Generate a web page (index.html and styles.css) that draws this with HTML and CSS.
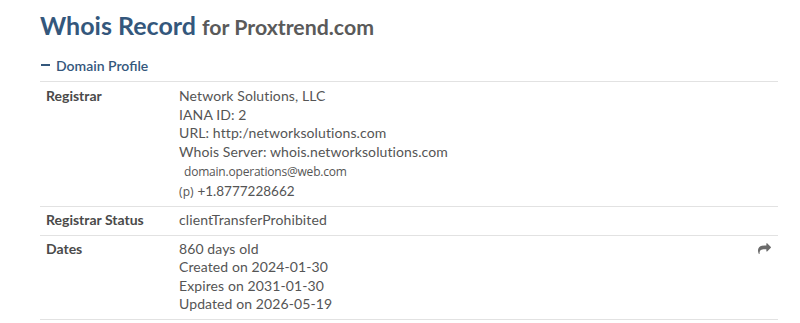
FILE: index.html
```html
<!DOCTYPE html>
<html lang="en">
<head>
    <meta charset="UTF-8">
    <title>Whois Record for Proxtrend.com</title>
    <link rel="stylesheet" href="styles.css">
</head>
<body>

<div class="container">
    <h1 class="page-title">Whois Record <span class="for-domain">for Proxtrend.com</span></h1>

    <div class="section-toggle"><span class="dash"></span>Domain Profile</div>

    <div class="profile-table">
        <div class="profile-row">
            <div class="row-label">Registrar</div>
            <div class="row-value">
                <div>Network Solutions, LLC</div>
                <div>IANA ID: 2</div>
                <div>URL: http:/networksolutions.com</div>
                <div>Whois Server: whois.networksolutions.com</div>
                <div class="email">domain.operations@web.com</div>
                <div><span class="phone-tag">(p)</span> <span class="phone">+1.8777228662</span></div>
            </div>
        </div>

        <div class="profile-row">
            <div class="row-label">Registrar Status</div>
            <div class="row-value">
                <div>clientTransferProhibited</div>
            </div>
        </div>

        <div class="profile-row">
            <div class="row-label">Dates</div>
            <div class="row-value">
                <div>860 days old</div>
                <div>Created on 2024-01-30</div>
                <div>Expires on 2031-01-30</div>
                <div>Updated on 2026-05-19</div>
            </div>
            <div class="row-action">
                <!-- share arrow -->
                <svg width="13" height="11" viewBox="0 64 1792 1472">
                    <path d="M1792 640q0 26-19 45l-512 512q-19 19-45 19t-45-19-19-45V896h-224q-98 0-175.5 6t-154 21.5-133 42.5-105.5 69.5-80 101-48.5 138.5-17.5 181q0 55 5 123 0 6 2.5 23.5t2.5 26.5q0 15-8.5 25t-23.5 10q-16 0-28-17-7-9-13-22t-13.5-30-10.5-24q-127-285-127-451 0-199 53-333 162-403 875-403h224V128q0-26 19-45t45-19 45 19l512 512q19 19 19 45z" fill="#6b6b6b"/>
                </svg>
            </div>
        </div>
    </div>
</div>

</body>
</html>
```

FILE: styles.css
```css
:root {
    --title-color: #34577c;
    --text-color: #555;
    --label-color: #4a4a4a;
    --border-color: #e2e2e2;
    --font-family: Lato, "Open Sans", Arial, sans-serif;
}

body {
    margin: 0;
    background: #fff;
    font-family: var(--font-family);
    color: var(--text-color);
}

.container {
    width: 738px;
    padding: 8px 0 0 40px;
}

.page-title {
    margin: 0;
    font-size: 25px;
    font-weight: 700;
    line-height: 34px;
    color: var(--title-color);
}

.for-domain {
    font-size: 21.3px;
    color: #5a5a5a;
}

.section-toggle {
    display: flex;
    align-items: center;
    margin-top: 11px;
    height: 20px;
    padding-bottom: 6px;
    font-size: 14px;
    font-weight: 600;
    color: var(--title-color);
    border-bottom: 1px solid var(--border-color);
}

.section-toggle .dash {
    width: 9px;
    height: 2px;
    margin: 0 6px 0 1px;
    background: var(--title-color);
}

.profile-table {
    margin-top: 1px;
}

.profile-row {
    display: flex;
    padding: 4px 0 5px;
    border-bottom: 1px solid var(--border-color);
}

.row-label {
    width: 133px;
    padding-left: 6px;
    font-size: 14px;
    font-weight: 700;
    line-height: 18.5px;
    color: var(--label-color);
}

.row-value {
    flex: 1;
    font-size: 14px;
    line-height: 18.5px;
    letter-spacing: 0.1px;
}

.row-value .email {
    padding: 2px 0 0 5px;
    font-family: "Open Sans", Arial, sans-serif;
    font-size: 12px;
    letter-spacing: -0.2px;
}

.phone-tag {
    font-family: "Open Sans", Arial, sans-serif;
    font-size: 12px;
}

.phone {
    font-size: 13.5px;
    letter-spacing: 0;
}

.row-action {
    width: 20px;
    padding-top: 3px;
}

.row-action svg {
    display: block;
}
```
